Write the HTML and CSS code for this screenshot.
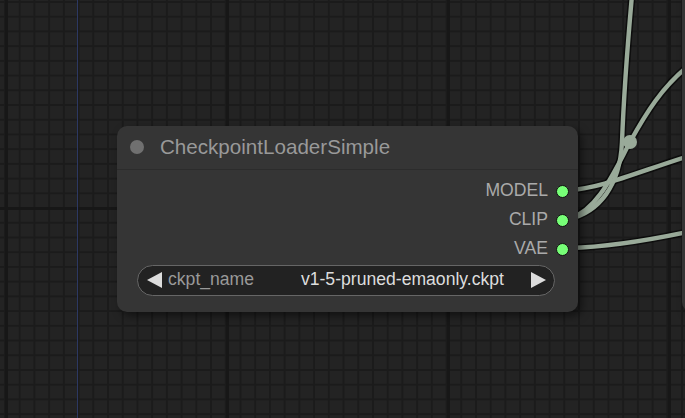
FILE: index.html
```html
<!DOCTYPE html>
<html>
<head>
<meta charset="utf-8">
<link rel="stylesheet" href="styles.css">
</head>
<body>
<div class="canvas">
  <div class="axis"></div>
  <svg class="links" width="685" height="418" viewBox="0 0 685 418">
    <g class="border">
      <path d="M569,190 C600,189 640,171 692,155"/>
      <path d="M569,248 C610,247 650,240 692,231"/>
      <path d="M569,219 C599,212 620,186 622,142 C624,90 628,40 632,-5"/>
      <path d="M569,219 C598,210 614,172 630,142 C645,115 662,86 692,63"/>
    </g>
    <g class="wire">
      <path d="M569,190 C600,189 640,171 692,155"/>
      <path d="M569,248 C610,247 650,240 692,231"/>
      <path d="M569,219 C599,212 620,186 622,142 C624,90 628,40 632,-5"/>
      <path d="M569,219 C598,210 614,172 630,142 C645,115 662,86 692,63"/>
    </g>
    <circle class="marker" cx="630" cy="142" r="7"/>
  </svg>
  <div class="node other"></div>
  <div class="node main">
    <div class="title">
      <span class="box"></span>
      <span class="title-text">CheckpointLoaderSimple</span>
    </div>
    <div class="body">
      <div class="outputs">
        <div class="slot"><span class="label">MODEL</span><i class="dot"></i></div>
        <div class="slot"><span class="label">CLIP</span><i class="dot"></i></div>
        <div class="slot"><span class="label">VAE</span><i class="dot"></i></div>
      </div>
      <div class="widget">
        <svg class="arrow" width="15" height="16" viewBox="0 0 15 16"><polygon points="15,0 0,8 15,16"/></svg>
        <span class="wlabel">ckpt_name</span>
        <span class="wvalue">v1-5-pruned-emaonly.ckpt</span>
        <svg class="arrow" width="15" height="16" viewBox="0 0 15 16"><polygon points="0,0 15,8 0,16"/></svg>
      </div>
    </div>
  </div>
</div>
</body>
</html>
```
FILE: styles.css
```css
html, body {
  margin: 0;
  padding: 0;
  background: #222;
}
.canvas {
  position: relative;
  width: 685px;
  height: 418px;
  overflow: hidden;
  background-color: #232323;
  background-image:
    linear-gradient(90deg, #171717 3px, transparent 3px),
    linear-gradient(180deg, #171717 3px, transparent 3px),
    linear-gradient(90deg, #1b1b1b 2px, transparent 2px),
    linear-gradient(180deg, #1b1b1b 2px, transparent 2px);
  background-size: 221px 100%, 100% 221px, 14.73px 100%, 100% 14.73px;
  background-position: 5px 0, 0 207px, 4px 0, 0 1px;
  font-family: "Liberation Sans", Arial, sans-serif;
}
.axis {
  position: absolute;
  left: 77px;
  top: 0;
  width: 1px;
  height: 100%;
  background: #2c3862;
}
.links {
  position: absolute;
  left: 0;
  top: 0;
}
.links path {
  fill: none;
  stroke-linecap: round;
}
.links .border path {
  stroke: rgba(0, 0, 0, 0.6);
  stroke-width: 7.5;
}
.links .wire path {
  stroke: #9a9;
  stroke-width: 4.4;
}
.links .marker {
  fill: #9a9;
}
.node {
  position: absolute;
  background: #353535;
  border-radius: 10px;
  box-shadow: 4px 4px 9px rgba(0, 0, 0, 0.5);
}
.node.other {
  left: 682px;
  top: -20px;
  width: 60px;
  height: 332px;
}
.node.main {
  left: 117px;
  top: 126px;
  width: 461px;
  height: 186px;
  display: flex;
  flex-direction: column;
}
.title {
  box-sizing: border-box;
  height: 44px;
  padding-left: 13px;
  display: flex;
  align-items: center;
  gap: 16px;
  border-bottom: 1px solid #2c2c2c;
  padding-bottom: 1px;
}
.box {
  width: 14px;
  height: 14px;
  border-radius: 50%;
  background: #707070;
}
.title-text {
  color: #999;
  font-size: 20.6px;
  line-height: 1;
}
.body {
  padding-top: 6.5px;
  display: flex;
  flex-direction: column;
}
.outputs {
  display: flex;
  flex-direction: column;
}
.slot {
  height: 29.1px;
  display: flex;
  align-items: center;
  justify-content: flex-end;
  gap: 8px;
  padding-right: 9px;
}
.label {
  color: #aaa;
  font-size: 17.6px;
  line-height: 1;
}
.dot {
  box-sizing: border-box;
  width: 13px;
  height: 13px;
  border-radius: 50%;
  background: #7f7;
  border: 1.5px solid #111;
}
.widget {
  box-sizing: border-box;
  margin: 1px 23px 0 20px;
  height: 31px;
  border: 1px solid #666;
  border-radius: 16px;
  background: #222;
  display: flex;
  align-items: center;
  padding: 0 8px 0 9px;
  font-size: 17.6px;
  line-height: 1;
}
.arrow {
  fill: #ddd;
  flex: none;
}
.wlabel {
  color: #999;
  margin-left: 6px;
}
.wvalue {
  color: #ddd;
  margin-left: auto;
  margin-right: 27px;
}
```
